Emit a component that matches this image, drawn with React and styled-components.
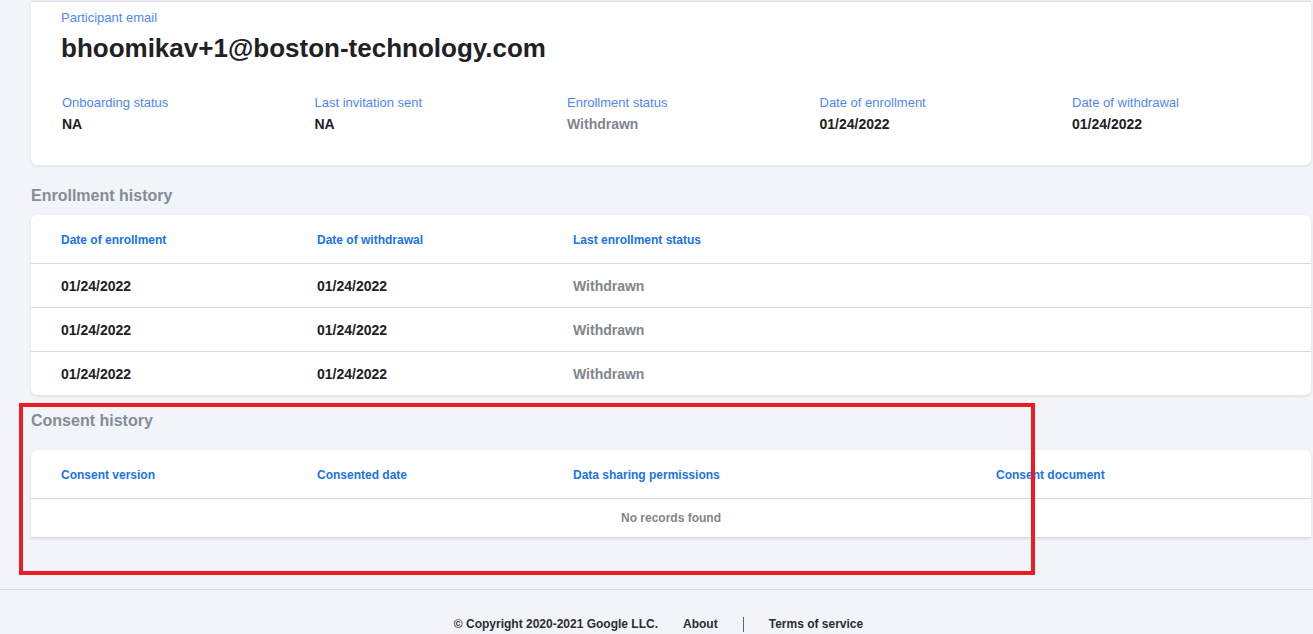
import React from "react";
import styled, { createGlobalStyle } from "styled-components";

const Global = createGlobalStyle`
  html, body { margin: 0; padding: 0; }
  body {
    background: #f1f4f8;
    font-family: "Liberation Sans", Arial, sans-serif;
    color: #202124;
  }
`;

const Page = styled.div`
  position: relative;
  min-height: 634px;
`;

const Main = styled.main`
  padding: 1px 2px 0 31px;
  display: flex;
  flex-direction: column;
`;

const InfoCard = styled.section`
  background: #fff;
  border-top: 1px solid #dcdfe4;
  border-radius: 0 0 6px 6px;
  box-shadow: 0 1px 3px rgba(60, 64, 67, 0.12);
  padding: 8px 30px 27px 30px;
  height: 164px;
  box-sizing: border-box;
`;

const SmallLabel = styled.div`
  font-size: 13px;
  line-height: 16px;
  color: #4f86f5;
`;

const Email = styled.h1`
  margin: 6px 0 0 0;
  font-size: 26px;
  line-height: 32px;
  font-weight: 700;
  color: #202124;
`;

const StatusGrid = styled.div`
  display: grid;
  grid-template-columns: repeat(5, 252.5px);
  margin-top: 31px;
  padding-left: 1px;
`;

const StatusItem = styled.div`
  display: flex;
  flex-direction: column;
  gap: 5px;
`;

const StatusValue = styled.div`
  font-size: 14px;
  line-height: 16px;
  font-weight: 700;
  color: ${(p) => (p.$muted ? "#80868b" : "#202124")};
`;

const SectionTitle = styled.h2`
  margin: ${(p) => p.$top}px 0 ${(p) => p.$bottom}px 0;
  font-size: 16px;
  line-height: 20px;
  font-weight: 700;
  color: #858c96;
`;

const TableCard = styled.div`
  background: #fff;
  border-radius: ${(p) => (p.$square ? "6px 6px 0 0" : "6px")};
  box-shadow: 0 1px 3px rgba(60, 64, 67, 0.12);
  border-bottom: ${(p) => (p.$square ? "1px solid #d3dae6" : "none")};
  overflow: hidden;
`;

const Row = styled.div`
  display: grid;
  grid-template-columns: ${(p) => p.$cols};
  align-items: center;
  height: ${(p) => p.$h}px;
  padding-left: 30px;
  border-top: ${(p) => (p.$first ? "none" : "1px solid #d3dae6")};
  box-sizing: border-box;
`;

const HeadCell = styled.div`
  font-size: 12px;
  font-weight: 700;
  color: #1a73e8;
  padding-top: 2px;
`;

const Cell = styled.div`
  font-size: 14px;
  font-weight: 700;
  color: ${(p) => (p.$muted ? "#80868b" : "#202124")};
  padding-top: 0;
`;

const Empty = styled.div`
  height: 39px;
  border-top: 1px solid #d3dae6;
  display: flex;
  align-items: center;
  justify-content: center;
  font-size: 12px;
  font-weight: 700;
  color: #80868b;
  box-sizing: border-box;
`;

const Footer = styled.footer`
  margin-top: 51px;
  border-top: 1px solid #d3dae6;
  display: flex;
  justify-content: center;
  align-items: center;
  gap: 25px;
  padding: 26px 0 0 4px;
  font-size: 12px;
  line-height: 16px;
  font-weight: 700;
  color: #2b2d31;
`;

const FooterText = styled.span`
  font-weight: 700;
`;

const Divider = styled.span`
  width: 1px;
  height: 15px;
  background: #5f6368;
`;

const Annotation = styled.div`
  position: absolute;
  left: 19px;
  top: 403px;
  width: 1016px;
  height: 172px;
  border: 4px solid #ed1c24;
  box-sizing: border-box;
  pointer-events: none;
`;

const enrollCols = "256px 256px 1fr";
const consentCols = "256px 256px 423px 1fr";

const statuses = [
  { label: "Onboarding status", value: "NA" },
  { label: "Last invitation sent", value: "NA" },
  { label: "Enrollment status", value: "Withdrawn", muted: true },
  { label: "Date of enrollment", value: "01/24/2022" },
  { label: "Date of withdrawal", value: "01/24/2022" },
];

const history = [
  ["01/24/2022", "01/24/2022", "Withdrawn"],
  ["01/24/2022", "01/24/2022", "Withdrawn"],
  ["01/24/2022", "01/24/2022", "Withdrawn"],
];

export default function App() {
  return (
    <Page>
      <Global />
      <Main>
        <InfoCard>
          <SmallLabel>Participant email</SmallLabel>
          <Email>bhoomikav+1@boston-technology.com</Email>
          <StatusGrid>
            {statuses.map((s) => (
              <StatusItem key={s.label}>
                <SmallLabel>{s.label}</SmallLabel>
                <StatusValue $muted={s.muted}>{s.value}</StatusValue>
              </StatusItem>
            ))}
          </StatusGrid>
        </InfoCard>

        <SectionTitle $top={21} $bottom={9}>Enrollment history</SectionTitle>
        <TableCard>
          <Row $cols={enrollCols} $h={48} $first>
            <HeadCell>Date of enrollment</HeadCell>
            <HeadCell>Date of withdrawal</HeadCell>
            <HeadCell>Last enrollment status</HeadCell>
          </Row>
          {history.map((r, i) => (
            <Row key={i} $cols={enrollCols} $h={44}>
              <Cell>{r[0]}</Cell>
              <Cell>{r[1]}</Cell>
              <Cell $muted>{r[2]}</Cell>
            </Row>
          ))}
        </TableCard>

        <SectionTitle $top={16} $bottom={19}>Consent history</SectionTitle>
        <TableCard $square>
          <Row $cols={consentCols} $h={48} $first>
            <HeadCell>Consent version</HeadCell>
            <HeadCell>Consented date</HeadCell>
            <HeadCell>Data sharing permissions</HeadCell>
            <HeadCell>Consent document</HeadCell>
          </Row>
          <Empty>No records found</Empty>
        </TableCard>
      </Main>
      <Footer>
        <FooterText>© Copyright 2020-2021 Google LLC.</FooterText>
        <FooterText>About</FooterText>
        <Divider />
        <FooterText>Terms of service</FooterText>
      </Footer>
      <Annotation />
    </Page>
  );
}
